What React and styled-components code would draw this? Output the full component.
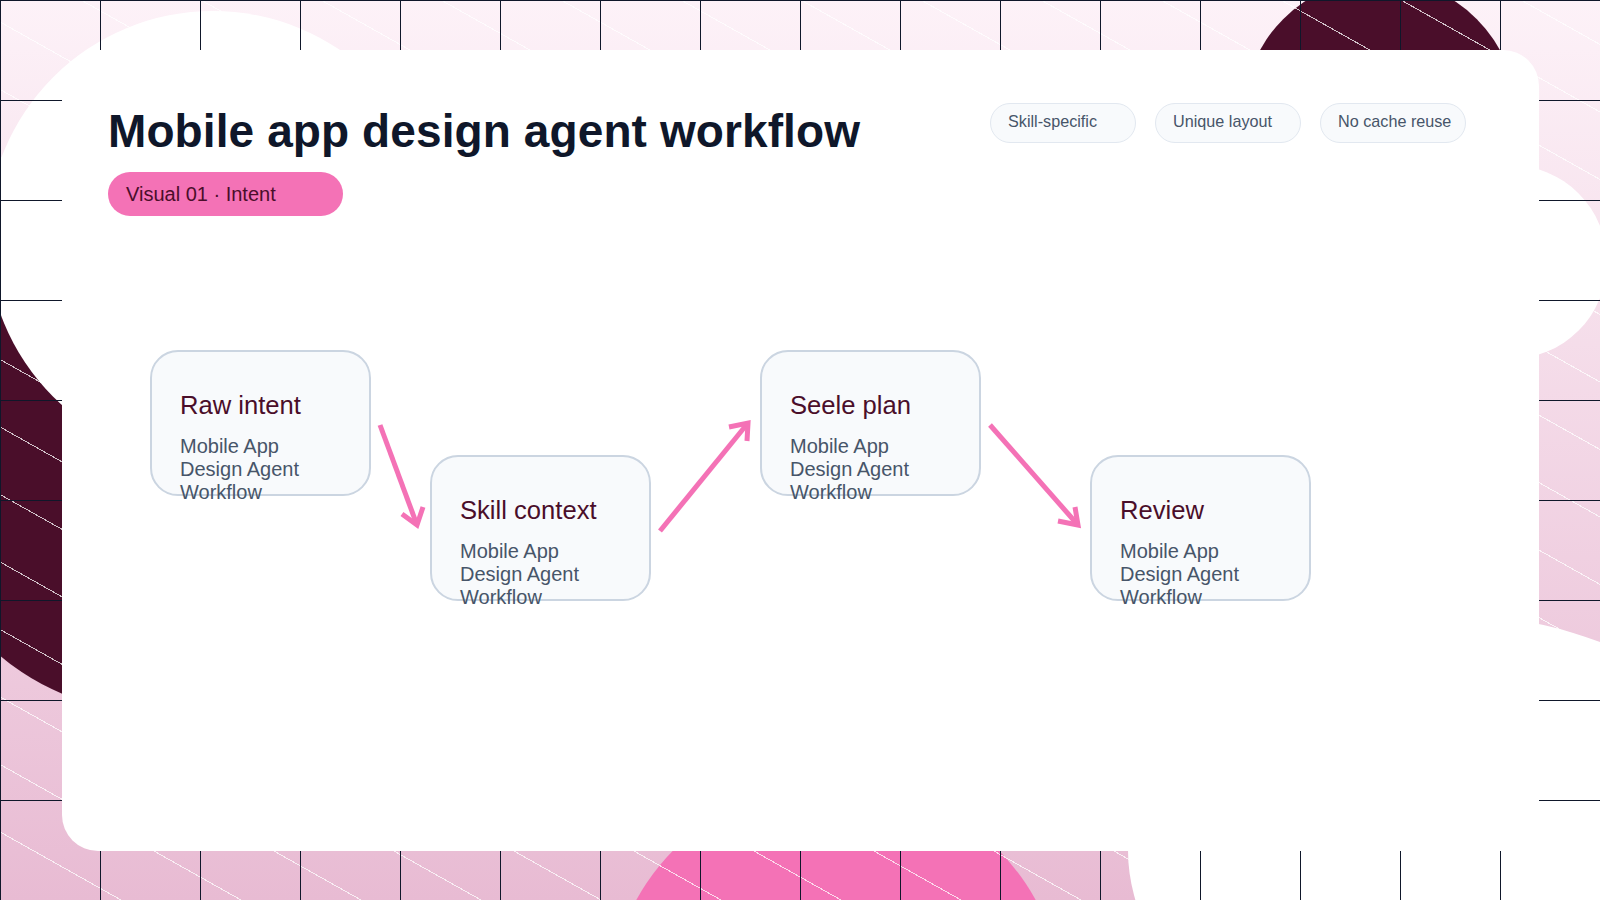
import React from 'react'
import styled, { createGlobalStyle } from 'styled-components'

const GlobalStyle = createGlobalStyle`
  html, body { margin: 0; padding: 0; }
  body { font-family: "Liberation Sans", Arial, sans-serif; background: #fff; }
  * { box-sizing: border-box; }
`

const Slide = styled.div`
  position: relative;
  width: 1600px;
  height: 900px;
  overflow: hidden;
  display: flex;
  padding: 50px 61px 49px 62px;
  background: linear-gradient(180deg, #fdf2f8 0%, #e8bbd3 100%);
`

const Blob = styled.div`
  position: absolute;
  left: ${p => p.$x}px;
  top: ${p => p.$y}px;
  width: ${p => p.$w}px;
  height: ${p => p.$h}px;
  border-radius: 50%;
  background: ${p => p.$color};
`

const Stripes = styled.div`
  position: absolute;
  inset: 0;
  background: repeating-linear-gradient(
    to top right,
    rgba(255, 255, 255, 0.75) 0,
    rgba(255, 255, 255, 0.75) 1px,
    transparent 1px,
    transparent 58.83px
  );
`

const Grid = styled.div`
  position: absolute;
  inset: 0;
  background-image:
    linear-gradient(#0f172a 1px, transparent 1px),
    linear-gradient(90deg, #0f172a 1px, transparent 1px);
  background-size: 100px 100px;
`

const Card = styled.main`
  position: relative;
  flex: 1;
  display: flex;
  flex-direction: column;
  padding: 53px 73px 0 46px;
  background: #fff;
  border-radius: 36px;
`

const Header = styled.header`
  display: flex;
  justify-content: space-between;
  align-items: flex-start;
`

const Heading = styled.div`
  display: flex;
  flex-direction: column;
  align-items: flex-start;
  gap: 14px;
  margin-top: 2px;
`

const Title = styled.h1`
  margin: 0;
  font-size: 46px;
  font-weight: 700;
  line-height: 53px;
  letter-spacing: 0.1px;
  color: #0f172a;
`

const Pill = styled.div`
  display: flex;
  align-items: center;
  width: 235px;
  height: 44px;
  padding: 0 18px;
  border-radius: 22px;
  background: #f472b6;
  color: #4a0e2a;
  font-size: 20px;
`

const Chips = styled.div`
  display: flex;
  gap: 19px;
`

const Chip = styled.div`
  width: 146px;
  height: 40px;
  padding: 7px 17px 0;
  border: 1px solid #e2e8f0;
  border-radius: 20px;
  background: #f8fafc;
  color: #475569;
  font-size: 16.2px;
  line-height: 20px;
  white-space: nowrap;
`

const Canvas = styled.section`
  position: relative;
  flex: 1;
  margin: 0 -73px 0 -46px;
`

const Node = styled.article`
  position: absolute;
  left: ${p => p.$x}px;
  top: ${p => p.$y}px;
  width: 221px;
  height: 146px;
  padding: 38px 28px 0;
  border: 2px solid #cbd5e1;
  border-radius: 28px;
  background: #f8fafc;
`

const NodeTitle = styled.h2`
  margin: 0 0 15px;
  font-size: 25.6px;
  font-weight: 400;
  line-height: 30px;
  color: #4a0e2a;
`

const NodeText = styled.p`
  margin: 0;
  font-size: 20px;
  line-height: 23px;
  color: #475569;
`

const Arrows = styled.svg`
  position: absolute;
  inset: 0;
  width: 100%;
  height: 100%;
  fill: none;
  stroke: #f472b6;
  stroke-width: 5;
  pointer-events: none;
`

const blobs = [
  { x: 1243, y: -21, w: 274, h: 274, color: '#4a0e2a' },
  { x: -81, y: 249, w: 462, h: 462, color: '#4a0e2a' },
  { x: 608, y: 782, w: 456, h: 456, color: '#f472b6' },
  { x: -13, y: 11, w: 452, h: 452, color: '#fff' },
  { x: 1413, y: 165, w: 194, h: 194, color: '#fff' },
  { x: 1128, y: 615, w: 644, h: 470, color: '#fff' },
]

const nodes = [
  { x: 88, y: 134, title: 'Raw intent' },
  { x: 368, y: 239, title: 'Skill context' },
  { x: 698, y: 134, title: 'Seele plan' },
  { x: 1028, y: 239, title: 'Review' },
]

// canvas coords, tail -> tip plus the two wing ends
const arrows = [
  { tail: [318, 209], tip: [355, 309], wings: [[340, 298], [361, 291]] },
  { tail: [598, 315], tip: [686, 207], wings: [[667, 211], [685, 225]] },
  { tail: [928, 209], tip: [1016, 309], wings: [[996, 305], [1013, 291]] },
]

export default function App() {
  return (
    <>
      <GlobalStyle />
      <Slide>
        {blobs.map((b, i) => (
          <Blob key={i} $x={b.x} $y={b.y} $w={b.w} $h={b.h} $color={b.color} />
        ))}
        <Stripes />
        <Grid />
        <Card>
          <Header>
            <Heading>
              <Title>Mobile app design agent workflow</Title>
              <Pill>Visual 01 · Intent</Pill>
            </Heading>
            <Chips>
              <Chip>Skill-specific</Chip>
              <Chip>Unique layout</Chip>
              <Chip>No cache reuse</Chip>
            </Chips>
          </Header>
          <Canvas>
            {nodes.map(n => (
              <Node key={n.title} $x={n.x} $y={n.y}>
                <NodeTitle>{n.title}</NodeTitle>
                <NodeText>Mobile App Design Agent Workflow</NodeText>
              </Node>
            ))}
            <Arrows>
              {arrows.map((a, i) => (
                <g key={i}>
                  <line x1={a.tail[0]} y1={a.tail[1]} x2={a.tip[0]} y2={a.tip[1]} />
                  <polyline points={`${a.wings[0]} ${a.tip} ${a.wings[1]}`} />
                </g>
              ))}
            </Arrows>
          </Canvas>
        </Card>
      </Slide>
    </>
  )
}
